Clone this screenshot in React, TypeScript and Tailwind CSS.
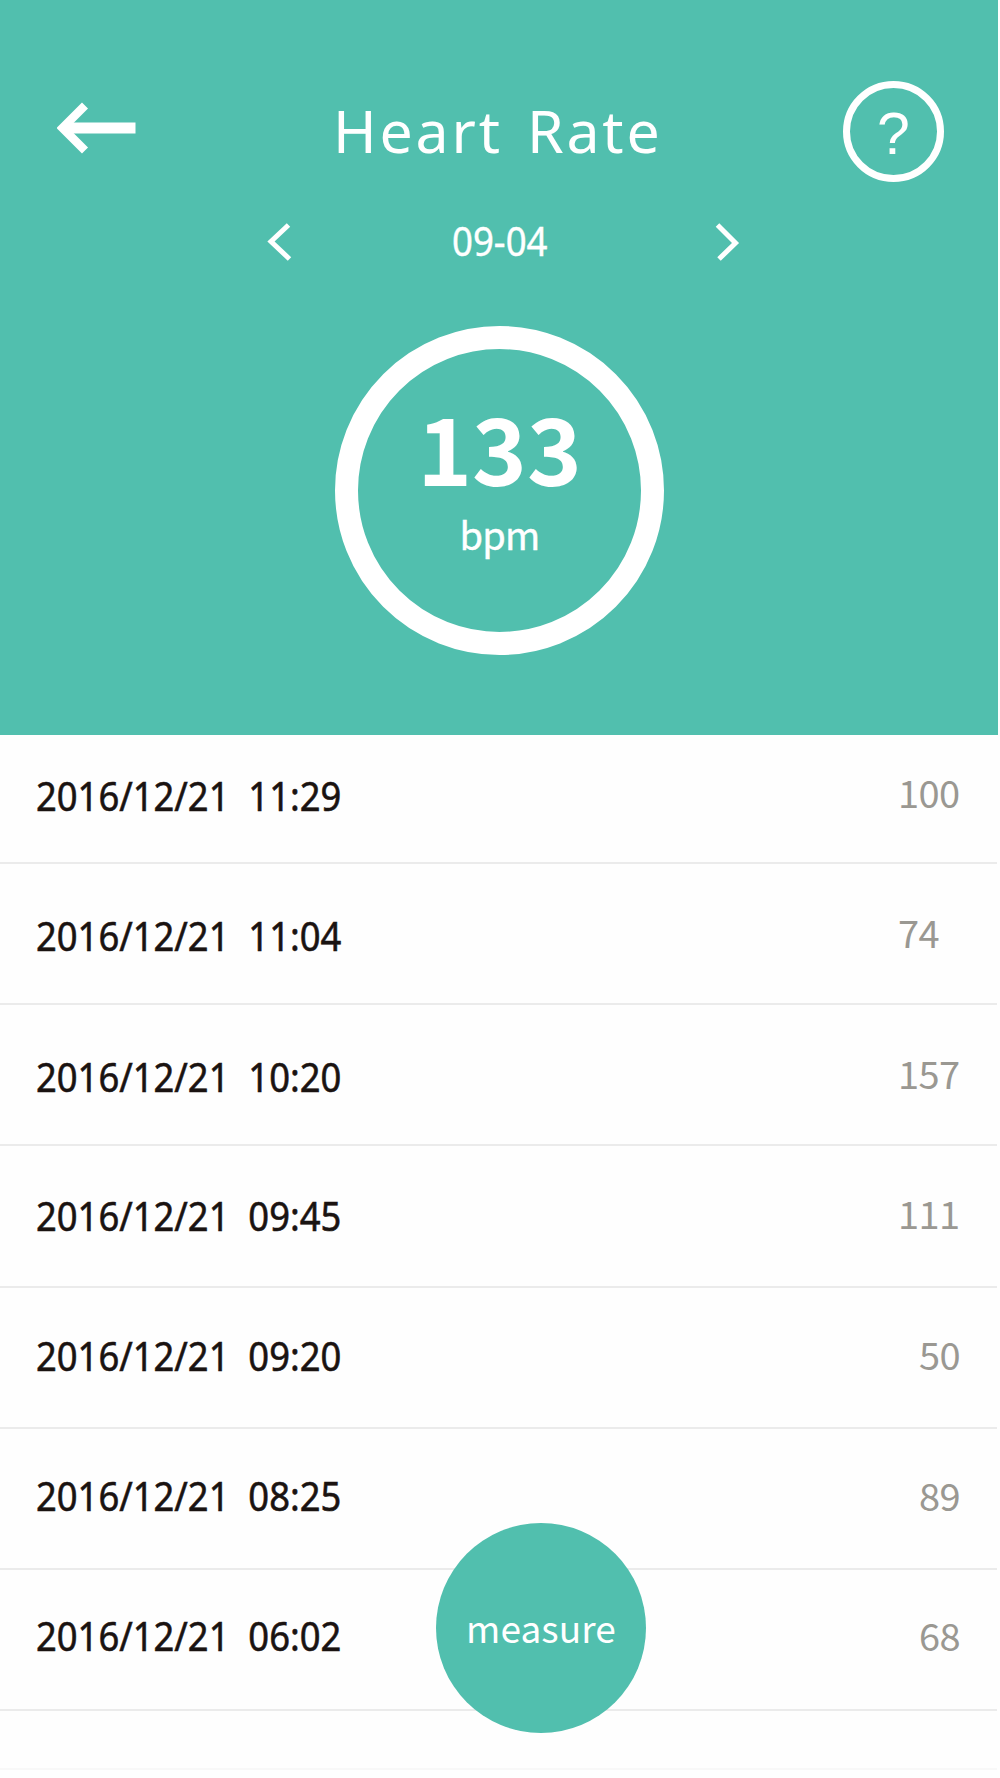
import { useState } from "react";

const records = [
  { date: "2016/12/21", time: "11:29", bpm: 100, row: "h-[129px]", datePad: "pt-[31px]", bpmPad: "pt-[27px]", bpmAlign: "text-left" },
  { date: "2016/12/21", time: "11:04", bpm: 74, row: "h-[141px]", datePad: "pt-[42px]", bpmPad: "pt-[38px]", bpmAlign: "text-left" },
  { date: "2016/12/21", time: "10:20", bpm: 157, row: "h-[141px]", datePad: "pt-[42px]", bpmPad: "pt-[38px]", bpmAlign: "text-left" },
  { date: "2016/12/21", time: "09:45", bpm: 111, row: "h-[142px]", datePad: "pt-[40px]", bpmPad: "pt-[37px]", bpmAlign: "text-left" },
  { date: "2016/12/21", time: "09:20", bpm: 50, row: "h-[141px]", datePad: "pt-[38px]", bpmPad: "pt-[36px]", bpmAlign: "pr-[2px] text-right" },
  { date: "2016/12/21", time: "08:25", bpm: 89, row: "h-[141px]", datePad: "pt-[37px]", bpmPad: "pt-[36px]", bpmAlign: "pr-[2px] text-right" },
  { date: "2016/12/21", time: "06:02", bpm: 68, row: "h-[141px]", datePad: "pt-[36px]", bpmPad: "pt-[35px]", bpmAlign: "pr-[2px] text-right" },
];

const days = ["09-03", "09-04", "09-05"];

export default function App() {
  const [day, setDay] = useState(1);

  return (
    <div className="relative h-[1778px] w-[1000px] overflow-hidden bg-[#fefefe] font-['Noto_Sans',sans-serif]">
      <header className="h-[735px] w-[998px] bg-[#51bfae] pt-[81px] text-white">
        <div className="flex h-[101px] items-start">
          <button className="mt-[21px] ml-[57px]" aria-label="Back">
            <svg width="80" height="52" viewBox="0 0 80 52" fill="none" stroke="currentColor">
              <path d="M28 3.5 L5.5 26 L28 48.5" strokeWidth="8.5" />
              <path d="M7 26 H78.5" strokeWidth="11" />
            </svg>
          </button>
          <h1 className="mt-[19px] ml-[196px] w-[340px] text-[59px] leading-[60px] tracking-[2.8px] whitespace-nowrap [word-spacing:6px]">
            Heart Rate
          </h1>
          <button
            className="ml-[170px] flex h-[101px] w-[101px] justify-center rounded-full border-[7px] border-white pt-[16px] font-['Liberation_Sans',sans-serif] text-[59px] leading-[60px]"
            aria-label="Help"
          >
            ?
          </button>
        </div>

        <div className="mt-[40px] flex h-10 items-start">
          <button
            className="ml-[267px]"
            aria-label="Previous day"
            onClick={() => setDay(Math.max(0, day - 1))}
          >
            <svg width="25" height="40" viewBox="0 0 25 40" fill="none" stroke="currentColor" strokeWidth="5">
              <path d="M21.5 3 L4 19.5 L22.5 37" />
            </svg>
          </button>
          <span className="-mt-px ml-[104px] w-[216px] text-center text-[40px] leading-10">
            <span className="inline-block origin-left scale-x-[0.915] [-webkit-text-stroke:0.4px_white]">{days[day]}</span>
          </span>
          <button
            className="ml-[103px]"
            aria-label="Next day"
            onClick={() => setDay(Math.min(days.length - 1, day + 1))}
          >
            <svg width="25" height="40" viewBox="0 0 25 40" fill="none" stroke="currentColor" strokeWidth="5">
              <path d="M2.5 3 L20.5 21 L4 37" />
            </svg>
          </button>
        </div>

        <div className="mt-[64px] ml-[335px] flex h-[329px] w-[329px] flex-col items-center rounded-full border-[23px] border-white font-['Noto_Sans_CJK_SC',sans-serif]">
          <span className="mt-[51px] text-[93px] leading-[92px] font-bold">133</span>
          <span className="mt-[17px] text-[38px] leading-[50px] tracking-[-0.7px] [-webkit-text-stroke:0.4px_white]">bpm</span>
        </div>
      </header>

      <ul className="w-[997px]">
        {records.map((r) => (
          <li key={r.time} className={`flex justify-between border-b-2 border-[#ebebeb] pr-[35px] pl-[35.5px] ${r.row}`}>
            <span
              className={`origin-left scale-x-[0.909] text-[40px] leading-[60px] whitespace-pre text-[#1a1311] [-webkit-text-stroke:0.6px_#1a1311] ${r.datePad}`}
            >
              {r.date + "  " + r.time}
            </span>
            <span
              className={`w-[64px] font-['Noto_Sans_CJK_SC',sans-serif] text-[38px] leading-[60px] tracking-[-0.6px] text-[#9a9892] ${r.bpmPad} ${r.bpmAlign}`}
            >
              {r.bpm}
            </span>
          </li>
        ))}
        <li className="h-[59px] border-b-2 border-[#f8f8f8]" />
      </ul>

      <button className="absolute top-[1523px] left-[436px] h-[210px] w-[210px] rounded-full bg-[#51bfae] font-['Noto_Sans_CJK_SC',sans-serif] text-[37px] tracking-[0.1px] text-white">
        measure
      </button>
    </div>
  );
}
